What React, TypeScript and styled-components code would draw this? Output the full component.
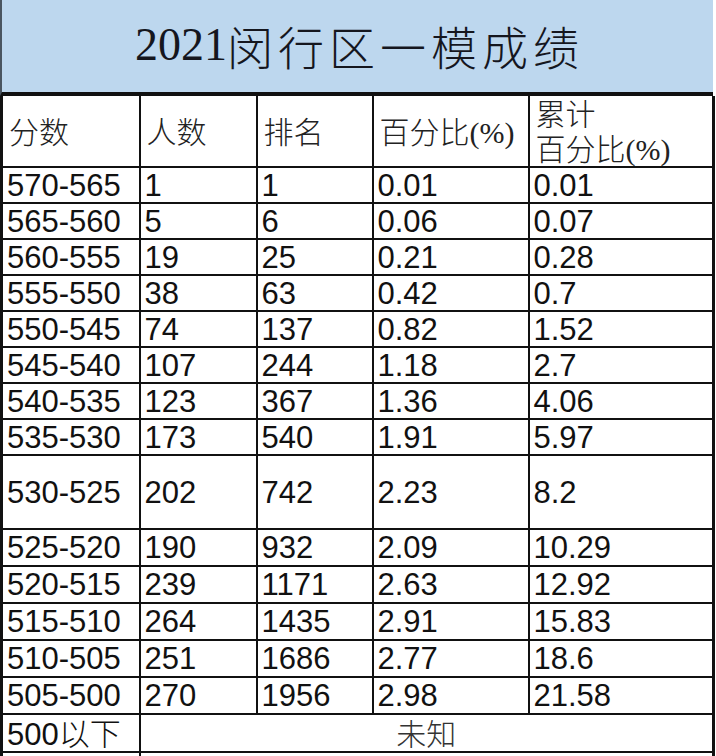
import React, { FC } from 'react';
import styled, { createGlobalStyle } from 'styled-components';

const GlobalStyle = createGlobalStyle`
    html, body {
        margin: 0;
        padding: 0;
        background: #fff;
    }
    body {
        width: 716px;
        overflow: hidden;
    }
`;

const Sheet = styled.div`
    width: 716px;
    background: #fff;
`;

const TitleBar = styled.div`
    display: flex;
    align-items: center;
    justify-content: center;
    box-sizing: border-box;
    width: 713px;
    height: 96px;
    padding: 0 0 2px 4px;
    background: #bdd7ee;
    border-left: 2px solid #4a5560;
    border-bottom: 4px solid #111;
    color: #15161e;
    font-family: 'Liberation Serif', 'Noto Sans CJK SC', serif;
    font-size: 46px;
    line-height: 1;
`;

const TitleHan = styled.span`
    font-family: 'Noto Sans CJK SC', sans-serif;
    font-weight: 300;
    letter-spacing: 5px;
`;

const Table = styled.table`
    width: 715px;
    border-collapse: collapse;
    table-layout: fixed;
    border-left: 3px solid #111;
    border-right: 3px solid #111;
    color: #111;
`;

const Row = styled.tr<{ $h: number }>`
    height: ${(p) => p.$h}px;
`;

const HeadCell = styled.th`
    padding: 0 6px;
    border: 2px solid #111;
    border-top: none;
    text-align: left;
    vertical-align: middle;
    font-family: 'Liberation Serif', 'Noto Sans CJK SC', serif;
    font-size: 30px;
    font-weight: 400;
    line-height: 32px;
    color: #222;
    white-space: nowrap;
`;

const Han = styled.span`
    font-family: 'Noto Sans CJK SC', sans-serif;
    font-weight: 300;
`;

const Cell = styled.td<{ $center?: boolean }>`
    padding: 0 4px;
    border: 2px solid #111;
    text-align: ${(p) => (p.$center ? 'center' : 'left')};
    vertical-align: middle;
    font-family: 'Liberation Sans', 'Noto Sans CJK SC', sans-serif;
    font-size: 31px;
    line-height: 1;
    white-space: nowrap;
`;

const Unknown = styled.span`
    font-family: 'Noto Sans CJK SC', sans-serif;
    font-weight: 300;
    font-size: 30px;
    color: #333;
`;

const rows: { cells: string[]; h: number }[] = [
    { cells: ['570-565', '1', '1', '0.01', '0.01'], h: 36 },
    { cells: ['565-560', '5', '6', '0.06', '0.07'], h: 36 },
    { cells: ['560-555', '19', '25', '0.21', '0.28'], h: 36 },
    { cells: ['555-550', '38', '63', '0.42', '0.7'], h: 36 },
    { cells: ['550-545', '74', '137', '0.82', '1.52'], h: 36 },
    { cells: ['545-540', '107', '244', '1.18', '2.7'], h: 36 },
    { cells: ['540-535', '123', '367', '1.36', '4.06'], h: 36 },
    { cells: ['535-530', '173', '540', '1.91', '5.97'], h: 36 },
    { cells: ['530-525', '202', '742', '2.23', '8.2'], h: 74 },
    { cells: ['525-520', '190', '932', '2.09', '10.29'], h: 37 },
    { cells: ['520-515', '239', '1171', '2.63', '12.92'], h: 37 },
    { cells: ['515-510', '264', '1435', '2.91', '15.83'], h: 37 },
    { cells: ['510-505', '251', '1686', '2.77', '18.6'], h: 37 },
    { cells: ['505-500', '270', '1956', '2.98', '21.58'], h: 37 },
];

const App: FC = () => (
    <>
        <GlobalStyle />
        <Sheet>
            <TitleBar>
                2021<TitleHan>闵行区一模成绩</TitleHan>
            </TitleBar>
            <Table>
                <colgroup>
                    <col style={{ width: 138 }} />
                    <col style={{ width: 117 }} />
                    <col style={{ width: 116 }} />
                    <col style={{ width: 156 }} />
                    <col style={{ width: 185 }} />
                </colgroup>
                <thead>
                    <Row $h={66}>
                        <HeadCell><Han>分数</Han></HeadCell>
                        <HeadCell><Han>人数</Han></HeadCell>
                        <HeadCell><Han>排名</Han></HeadCell>
                        <HeadCell><Han>百分比</Han>(%)</HeadCell>
                        <HeadCell>
                            <Han>累计</Han>
                            <br />
                            <Han>百分比</Han>(%)
                        </HeadCell>
                    </Row>
                </thead>
                <tbody>
                    {rows.map((r) => (
                        <Row key={r.cells[0]} $h={r.h}>
                            {r.cells.map((c, i) => (
                                <Cell key={i}>{c}</Cell>
                            ))}
                        </Row>
                    ))}
                    <Row $h={38}>
                        <Cell>500<Han>以下</Han></Cell>
                        <Cell colSpan={4} $center>
                            <Unknown>未知</Unknown>
                        </Cell>
                    </Row>
                    <Row $h={30}>
                        <Cell />
                        <Cell colSpan={4} />
                    </Row>
                </tbody>
            </Table>
        </Sheet>
    </>
);

export default App;
